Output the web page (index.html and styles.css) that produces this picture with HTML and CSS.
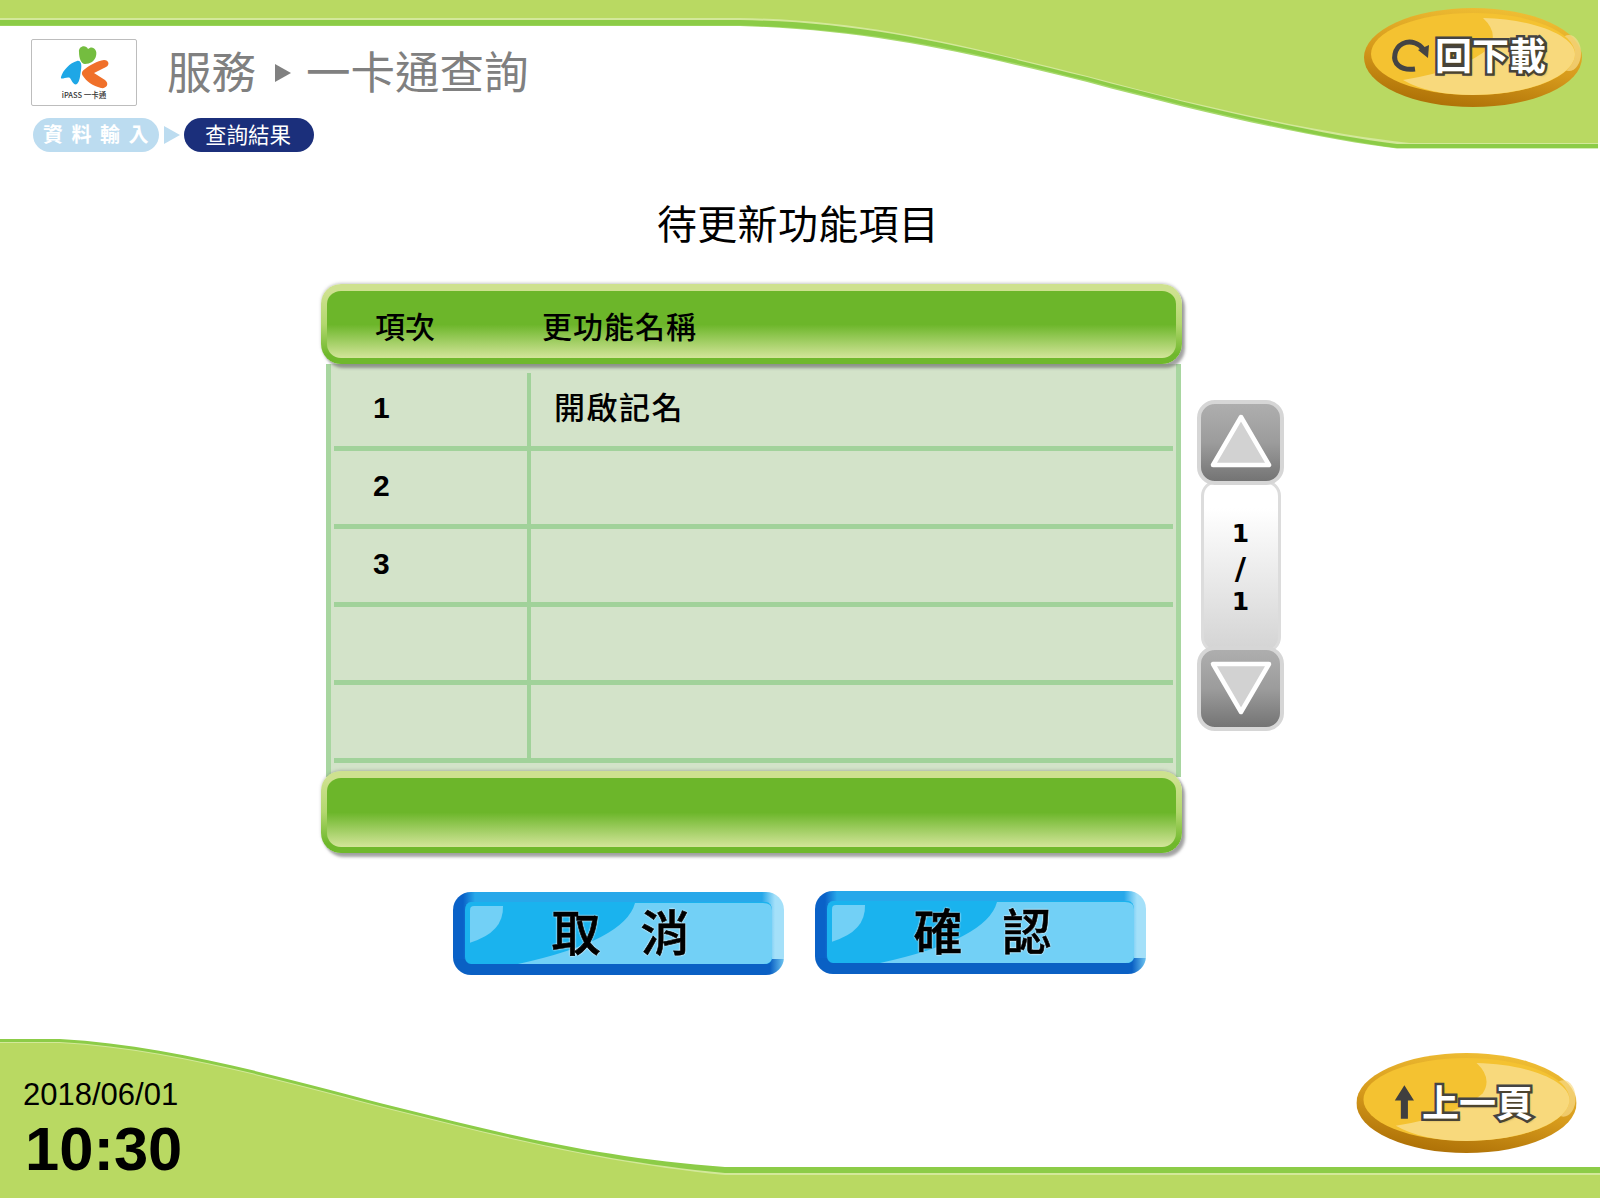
FILE: index.html
```html
<!DOCTYPE html>
<html lang="zh-Hant">
<head>
<meta charset="utf-8">
<title>一卡通查詢</title>
<link rel="stylesheet" href="styles.css">
</head>
<body>
<div class="page">
  <svg class="wave" viewBox="0 0 1600 1200" aria-hidden="true">
    <path class="w-outer" d="M0 0H1598V148.500H1397C1324 140 1206 114 1087 82C969 53 870 30 740 26H0Z"/>
    <path class="w-dark" d="M0 0H1598V148H1397C1324 138.500 1206 112.500 1087 80.500C969 51.500 870 28 740 25.500H0Z"/>
    <path class="w-light" d="M0 0H1598V144H1397C1324 135 1206 109 1087 77C969 48 870 22 740 20H0Z"/>
    <path class="w-fill" d="M0 0H1598V143H1410C1324 134 1206 108 1087 76C969 47 870 20 740 18H0Z"/>
    <path class="w-dark" d="M0 1198V1039H60C180 1046 300 1083 400 1108C500 1133 600 1158 725 1167H1600V1198Z"/>
    <path class="w-light" d="M0 1198V1042H60C180 1049 300 1086 400 1111C500 1136 600 1161 725 1173H1600V1198Z"/>
    <path class="w-fill" d="M0 1198V1043H60C180 1050 300 1087 400 1112C500 1137 600 1162 725 1175H1600V1198Z"/>
    <defs>
      <linearGradient id="rim" x1="0.7" y1="0" x2="0.35" y2="1">
        <stop offset="0" stop-color="#f0bf35"/>
        <stop offset="0.55" stop-color="#d69a1c"/>
        <stop offset="1" stop-color="#ad7006"/>
      </linearGradient>
      <symbol id="oval" viewBox="0 0 218 99">
        <ellipse cx="109" cy="49.500" rx="109" ry="49.500" fill="url(#rim)"/>
        <ellipse cx="205" cy="45" rx="12" ry="18" fill="#f8dc8a" opacity=".7"/>
        <ellipse cx="109" cy="46" rx="102" ry="41" fill="#f4c231"/>
        <path fill="#f8d97c" d="M119 10Q135 25 125 40Q100 62 39 72Q65 87 109 87C165 87 211 68 211 46C211 28 170 11 119 10Z"/>
      </symbol>
    </defs>
  </svg>

  <header class="top">
    <div class="brand">
      <div class="brand-row">
        <div class="logo">
          <svg class="logo-art" viewBox="0 0 104 65">
            <path fill="#74bd3f" d="M47 12C46 6 54 4 56 9C60 5 66 9 64 16C63 21 58 24 53 24C49 24 47 18 47 12Z"/>
            <path fill="#1ea7e6" d="M29 37C31 30 38 23 45 21C49 20 50 25 49 30C48 36 48 41 45 44C42 46 40 41 38 38C35 36 28 41 29 37Z"/>
            <path fill="#f0702a" d="M72 20C77 20 78 25 74 27L62 33L73 40C78 44 74 49 69 48C61 46 54 41 51 36C49 33 50 31 53 29C58 25 65 21 72 20Z"/>
            <text class="logo-text" x="52" y="58" text-anchor="middle">iPASS 一卡通</text>
          </svg>
        </div>
        <h1 class="title">服務<svg class="title-arrow" viewBox="0 0 16 18"><polygon points="0,0 16,9 0,18"/></svg>一卡通查詢</h1>
      </div>
      <div class="steps">
        <span class="step step-done">資料輸入</span>
        <svg class="step-arrow" viewBox="0 0 16 18"><polygon points="0,0 16,9 0,18"/></svg>
        <span class="step step-now">查詢結果</span>
      </div>
    </div>
    <button class="oval-btn oval-dl" type="button">
      <svg class="oval-bg" viewBox="0 0 218 99">
        <use href="#oval"/>
        <path class="dl-ring" d="M51 61C36 63 29 55 31 46C33 36 43 32 51 35C54 36 57 38 59 41"/>
        <polygon class="dl-head" points="54,42 65,37 64,50"/>
      </svg>
      <span class="oval-label">回下載</span>
    </button>
  </header>

  <main class="content">
    <h2 class="heading">待更新功能項目</h2>
    <div class="table-wrap">
      <div class="list">
        <div class="bar bar-head"><span class="th-no">項次</span><span class="th-name">更功能名稱</span></div>
        <div class="rows">
          <div class="row"><div class="c-no">1</div><div class="c-name">開啟記名</div></div>
          <div class="row"><div class="c-no">2</div><div class="c-name"></div></div>
          <div class="row"><div class="c-no">3</div><div class="c-name"></div></div>
          <div class="row"><div class="c-no"></div><div class="c-name"></div></div>
          <div class="row"><div class="c-no"></div><div class="c-name"></div></div>
        </div>
        <div class="bar bar-foot"></div>
      </div>
      <div class="scroller">
        <button class="sc-btn sc-up" type="button"><svg class="sc-tri" viewBox="0 0 64 56"><polygon points="32,4 60,52 4,52"/></svg></button>
        <div class="sc-page"><span>1</span><span class="sc-slash">/</span><span>1</span></div>
        <button class="sc-btn sc-down" type="button"><svg class="sc-tri" viewBox="0 0 64 56"><polygon points="4,4 60,4 32,52"/></svg></button>
      </div>
    </div>
    <div class="actions">
      <button class="blue-btn" type="button">
        <svg class="gloss" viewBox="0 0 307 61" preserveAspectRatio="none"><path d="M5 8Q5 4 9 4H38Q39 30 5 40Z"/><path d="M170 1Q160 38 53 61H298Q307 61 307 54V8Q307 1 298 1Z"/></svg>
        <span class="blue-label">取消</span>
      </button>
      <button class="blue-btn blue-btn-alt" type="button">
        <svg class="gloss" viewBox="0 0 307 61" preserveAspectRatio="none"><path d="M5 8Q5 4 9 4H38Q39 30 5 40Z"/><path d="M170 1Q160 38 53 61H298Q307 61 307 54V8Q307 1 298 1Z"/></svg>
        <span class="blue-label">確認</span>
      </button>
    </div>
  </main>

  <footer class="bottom">
    <div class="clock">
      <div class="date">2018/06/01</div>
      <div class="time">10:30</div>
    </div>
    <button class="oval-btn oval-back" type="button">
      <svg class="oval-bg" viewBox="0 0 218 99">
        <use href="#oval"/>
        <polygon class="up-arrow" points="47.500,32 57,47 51,47 51,65 44,65 44,47 38,47"/>
      </svg>
      <span class="oval-label">上一頁</span>
    </button>
  </footer>
</div>
</body>
</html>
```
FILE: styles.css
```css
* { box-sizing: border-box; }
html, body { margin: 0; padding: 0; background: #fff; }
body { font-family: "Noto Sans CJK TC", "Liberation Sans", sans-serif; color: #000; }
button { font: inherit; padding: 0; border: 0; background: none; }
h1, h2 { margin: 0; }

.page { position: relative; width: 1600px; height: 1200px; overflow: hidden; display: flex; flex-direction: column; }
.wave { position: absolute; left: 0; top: 0; width: 1600px; height: 1200px; }
.w-outer { fill: #a9da6e; }
.w-dark { fill: #8ccc47; }
.w-light { fill: #d3e89a; }
.w-fill { fill: #b9d962; }

.top { position: relative; height: 160px; display: flex; justify-content: space-between; padding: 0 18px 0 31px; flex: none; }
.brand { padding-top: 39px; }
.brand-row { display: flex; align-items: center; }
.logo { width: 106px; height: 67px; background: #fff; border: 1px solid #bdbdbd; border-radius: 2px; }
.logo-art { display: block; width: 104px; height: 65px; }
.logo-text { font: 500 7.5px "Noto Sans CJK TC", sans-serif; fill: #333; }
.title { display: flex; align-items: center; margin-left: 30px; padding-bottom: 5px; font-size: 44.500px; font-weight: 400; line-height: 56px; color: #808080; }
.title-arrow { width: 16px; height: 18px; margin: 5px 15px 0 19px; fill: #808080; }

.steps { display: flex; align-items: center; margin: 12px 0 0 2px; }
.step { display: block; height: 34px; border-radius: 17px; color: #fff; white-space: nowrap; }
.step-done { width: 126px; padding-left: 10px; background: #bcdcf0; font-size: 20px; font-weight: 700; line-height: 32px; letter-spacing: 8.500px; }
.step-now { width: 130px; padding-left: 21px; background: #1b2f7b; font-size: 21.500px; line-height: 31px; }
.step-arrow { width: 16px; height: 18px; margin: 0 4px 0 5px; fill: #bcdcf0; }

.oval-btn { position: relative; display: flex; align-items: center; justify-content: flex-end; flex: none; }
.oval-bg { position: absolute; left: 0; top: 0; width: 100%; height: 100%; }
.oval-dl { width: 218px; height: 99px; margin-top: 8px; padding: 0 36px 7px 0; }
.oval-back { width: 221px; height: 100px; margin-top: 78px; padding: 0 44px 4px 0; }
.oval-label { position: relative; font-weight: 700; font-size: 37px; line-height: 50px; color: #fff; -webkit-text-stroke: 5px #444; paint-order: stroke fill; text-shadow: 2px 2px 2px rgba(90,70,20,.55); }
.dl-ring { fill: none; stroke: #444; stroke-width: 5; }
.dl-head { fill: #444; }
.up-arrow { fill: #3f3f3f; }

.content { position: relative; flex: none; padding-top: 37px; }
.heading { padding-left: 657px; font-size: 40px; font-weight: 400; line-height: 50px; letter-spacing: .3px; }

.table-wrap { display: flex; align-items: flex-start; margin-top: 37px; padding-left: 321px; }
.list { width: 861px; }
.bar { position: relative; height: 80px; border: solid transparent; border-width: 7px 6px 6px; border-radius: 20px; background: linear-gradient(#6cb62a 0, #6cb62a 50%, #d3e59a 100%) padding-box, linear-gradient(#cee18f 10%, #b3d76f 50%, #6fb82c 88%) border-box; box-shadow: 3px 4px 3px rgba(90,90,90,.55), 0 -1px 3px rgba(120,120,120,.4); }
.bar-head { display: flex; align-items: center; font-size: 30px; font-weight: 500; }
.bar-foot { height: 82px; margin-top: -6px; }
.th-no { margin-left: 48px; }
.th-name { margin-left: 107px; letter-spacing: 1px; }

.rows { margin: 0 1px 0 5px; height: 413px; padding: 9px 3px 0; background: #d3e3c9; border-left: 5px solid #a8d6a0; border-right: 5px solid #a8d6a0; }
.row { display: flex; height: 78px; border-bottom: 5px solid #a1d29a; }
.c-no { width: 197px; border-right: 4px solid #a1d29a; padding-left: 39px; font: 700 30px/70px "Liberation Sans", sans-serif; }
.c-name { padding-left: 23px; font-size: 31px; font-weight: 500; line-height: 66px; letter-spacing: 1.500px; }

.scroller { display: flex; flex-direction: column; align-items: center; width: 87px; margin: 116px 0 0 15px; }
.sc-btn { position: relative; z-index: 1; display: flex; align-items: center; justify-content: center; width: 87px; height: 85px; border: 4px solid #d6d6d6; border-radius: 18px; background: linear-gradient(#aeaeae, #9c9c9c 50%, #747474); }
.sc-tri { width: 64px; height: 56px; margin-bottom: 3px; }
.sc-down .sc-tri { margin: 0 0 1px; }
.sc-tri polygon { fill: #d2d2d2; stroke: #fff; stroke-width: 4.500; stroke-linejoin: round; }
.sc-page { display: flex; flex-direction: column; align-items: center; justify-content: center; width: 80px; height: 173px; margin: -5px 0 -7px; padding-top: 3px; border: 3px solid #dcdcdc; border-radius: 16px; background: linear-gradient(#fff 15%, #d4d4d4); font: 700 25px/34px "DejaVu Sans", sans-serif; }
.sc-slash { font-size: 31px; }

.actions { display: flex; align-items: flex-start; gap: 31px; margin-top: 38px; padding-left: 453px; }
.blue-btn { position: relative; display: flex; align-items: center; justify-content: center; width: 331px; height: 83px; margin-top: 1px; border: solid transparent; border-width: 10px 12px 11px 12px; border-radius: 18px; background: linear-gradient(#1ab3ee, #1ab3ee) padding-box, linear-gradient(to right, #0a60c4, #0a60c4 calc(100% - 14px), #6cc4f0) bottom / 100% 16px no-repeat border-box, linear-gradient(to right, #0a62c8 10px, #27a8ea 22px, #27a8ea calc(100% - 22px), #a4e0f9 calc(100% - 9px)) border-box; }
.blue-btn-alt { margin-top: 0; }
.gloss { position: absolute; left: 0; top: 0; width: 100%; height: 100%; fill: #72d0f6; }
.blue-label { position: relative; padding-left: 44px; margin-top: -6px; font-size: 49px; font-weight: 500; line-height: 60px; letter-spacing: 40px; color: #000; -webkit-text-stroke: .6px #000; text-shadow: 0 0 2px #fff, 0 0 2px #fff; }

.bottom { position: relative; flex: 1; display: flex; justify-content: space-between; align-items: flex-start; padding: 0 23px 0 23px; }
.clock { font-family: "Liberation Sans", sans-serif; margin-top: 102px; }
.date { font-size: 31px; line-height: 36px; }
.time { margin: 3px 0 0 2px; font-size: 61.500px; font-weight: 700; line-height: 66px; }
```
